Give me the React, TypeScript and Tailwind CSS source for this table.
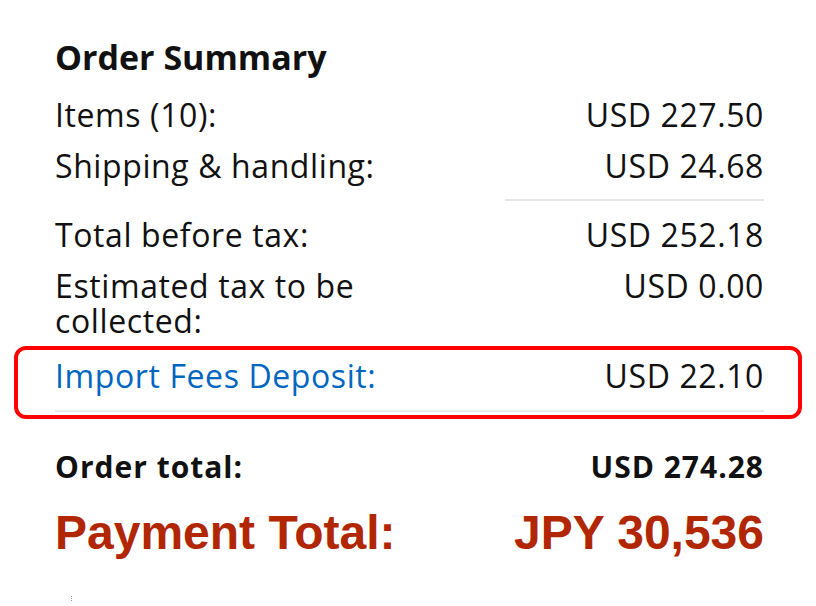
const rows = [
  { label: "Items (10):", value: "USD 227.50" },
  { label: "Shipping & handling:", value: "USD 24.68" },
];

const Row = ({ label, value, link }: { label: string; value: string; link?: boolean }) => (
  <div className="flex justify-between items-start text-[32px] leading-[35px] tracking-[0.6px]">
    <span className={`w-[340px] ${link ? "text-[#0066c0]" : ""}`}>{label}</span>
    <span className="text-right">{value}</span>
  </div>
);

export default function App() {
  return (
    <div className="w-[816px] h-[606px] overflow-hidden bg-white text-[#111111] font-['Open_Sans',sans-serif]">
      <div className="pl-[55px] pr-[52px] pt-[37px]">
        {/* Header */}
        <h2 className="text-[34px] font-bold leading-[40px] mb-[20px]">Order Summary</h2>

        <div className="flex flex-col gap-4">
          {rows.map((r) => (
            <Row key={r.label} label={r.label} value={r.value} />
          ))}
          <div className="flex justify-end">
            <div className="w-[259px] h-[2px] bg-[#e7e7e7]" />
          </div>
          <Row label="Total before tax:" value="USD 252.18" />
          <Row label="Estimated tax to be collected:" value="USD 0.00" />
        </div>

        {/* Highlighted import fees */}
        <div className="-ml-[41px] -mr-[38px] mt-[8px] border-[4px] border-[#ff0000] rounded-[12px] pl-[37px] pr-[34px] pt-[8px] pb-[3px]">
          <Row label="Import Fees Deposit:" value="USD 22.10" link />
          <div className="h-[2px] bg-[#e7e7e7] mt-[17px]" />
        </div>

        {/* Totals */}
        <div className="flex justify-between items-center mt-[31px] font-bold text-[30px] leading-[34px] tracking-[1px]">
          <span>Order total:</span>
          <span>USD 274.28</span>
        </div>
        <div className="flex justify-between items-center mt-[22px] font-['Liberation_Sans',Arial,sans-serif] font-bold text-[48px] leading-[54px] text-[#b12704]">
          <span>Payment Total:</span>
          <span>JPY 30,536</span>
        </div>
        <div className="ml-[16px] mt-[36px] w-px h-[5px] border-l border-dotted border-[#9a9a9a]" />
      </div>
    </div>
  );
}
